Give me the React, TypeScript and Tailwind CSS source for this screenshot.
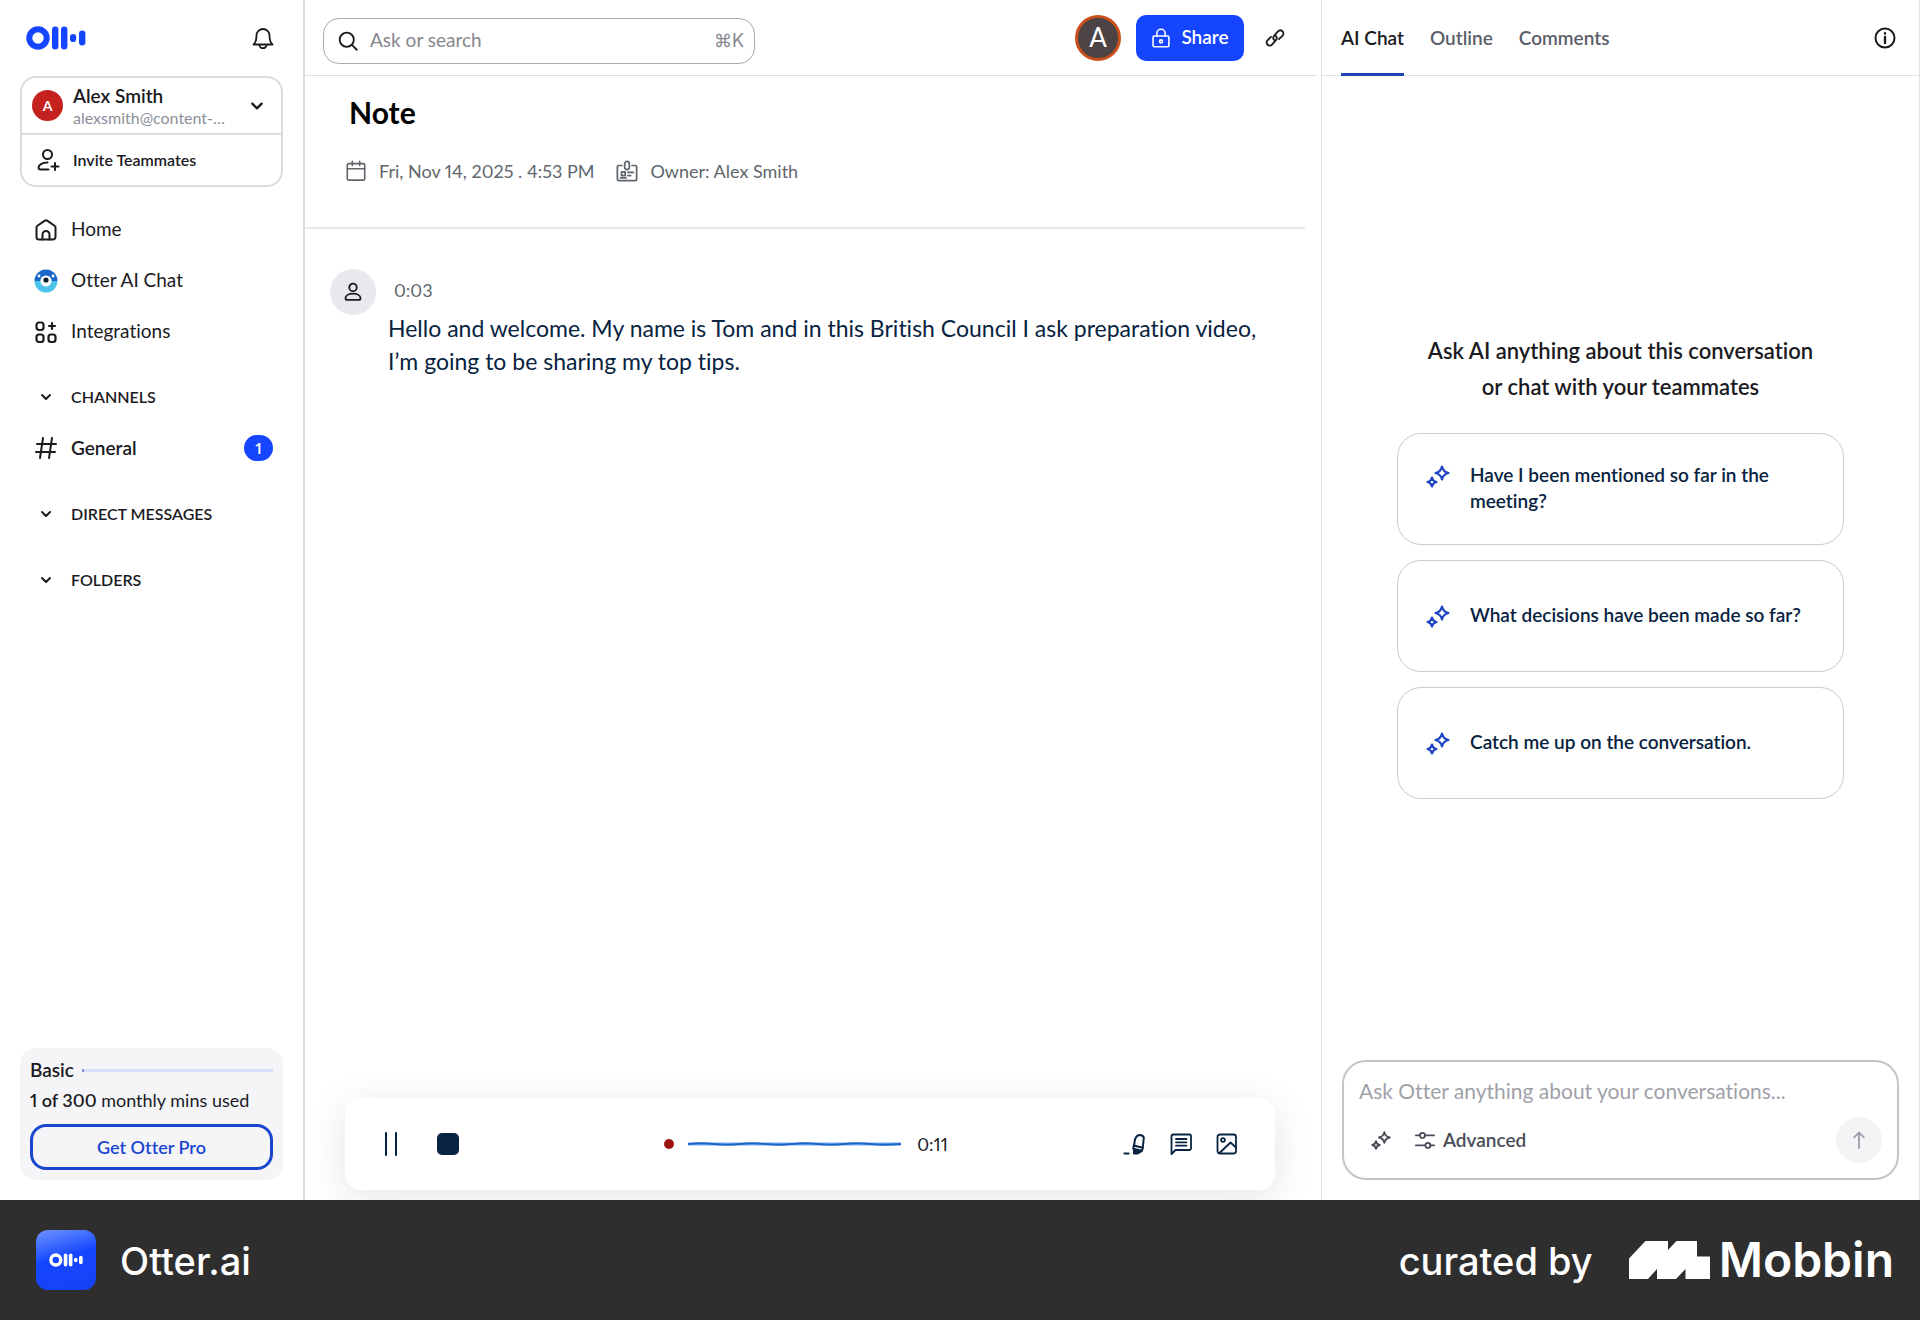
import type { ReactNode } from 'react'

const Sparkles = ({ className, size }: { className?: string; size: number }) => (
  <svg className={className} width={size} height={size} viewBox="0 0 24 24" fill="none" stroke="currentColor" strokeWidth="2.2" strokeLinejoin="round" aria-hidden="true">
    <path d="M16 2.5C16.8 6.4 18.6 8.2 22.5 9C18.6 9.8 16.8 11.6 16 15.5C15.2 11.6 13.4 9.8 9.5 9C13.4 8.2 15.2 6.4 16 2.5Z" />
    <path d="M6 13.5C6.6 16.4 7.6 17.4 10.5 18C7.6 18.6 6.6 19.6 6 22.5C5.4 19.6 4.4 18.6 1.5 18C4.4 17.4 5.4 16.4 6 13.5Z" />
  </svg>
)

const Chevron = ({ size }: { size: number }) => (
  <svg width={size} height={size} viewBox="0 0 12 12" fill="none" stroke="currentColor" strokeWidth="2" strokeLinecap="round" strokeLinejoin="round" aria-hidden="true">
    <path d="M2 4l4 4 4-4" />
  </svg>
)

const OtterMark = ({ width, height }: { width: number; height: number }) => (
  <svg width={width} height={height} viewBox="0 0 60 24" fill="currentColor" aria-hidden="true">
    <circle cx="12" cy="12" r="8.7" fill="none" stroke="currentColor" strokeWidth="6" />
    <rect x="26" y="0.5" width="6.4" height="23" rx="3.2" />
    <rect x="35" y="0.5" width="6.4" height="23" rx="3.2" />
    <rect x="44" y="8" width="6.2" height="8" rx="3.1" />
    <rect x="53" y="4.5" width="6.4" height="15" rx="3.2" />
  </svg>
)

const Icon = ({ size, stroke, children }: { size: number; stroke: number; children: ReactNode }) => (
  <svg width={size} height={size} viewBox="0 0 24 24" fill="none" stroke="currentColor" strokeWidth={stroke} strokeLinecap="round" strokeLinejoin="round" aria-hidden="true" className="shrink-0">
    {children}
  </svg>
)

const navItems = [
  {
    label: 'Home',
    icon: (
      <Icon size={24} stroke={2}>
        <path d="M2.5 9.5a2 2 0 0 1 .9-1.7L10.9 2.6a2 2 0 0 1 2.2 0l7.5 5.2a2 2 0 0 1 .9 1.7V19a2.5 2.5 0 0 1-2.5 2.5h-14A2.5 2.5 0 0 1 2.5 19z" />
        <path d="M8.5 21.5V16.5a3.5 3.5 0 0 1 7 0v5" />
      </Icon>
    ),
  },
  {
    label: 'Otter AI Chat',
    icon: (
      <svg width="24" height="24" viewBox="0 0 24 24" aria-hidden="true">
        <path d="M0.5 12a11.5 11.5 0 0 1 23 0z" fill="#1b66c9" />
        <path d="M0.5 12a11.5 11.5 0 0 0 23 0z" fill="#4cc3ea" />
        <circle cx="5" cy="7" r="1.4" fill="#fff" />
        <circle cx="19" cy="7" r="1.4" fill="#fff" />
        <circle cx="12" cy="12" r="5.6" fill="#fff" />
        <circle cx="12" cy="11" r="2.6" fill="#0b1f33" />
      </svg>
    ),
  },
  {
    label: 'Integrations',
    icon: (
      <Icon size={24} stroke={2.2}>
        <rect x="2.5" y="2.5" width="7" height="7.5" rx="2.5" />
        <rect x="2.5" y="14.5" width="7" height="7.5" rx="2.5" />
        <rect x="14.5" y="14.5" width="7" height="7.5" rx="2.5" />
        <path d="M18 3v6M15 6h6" />
      </Icon>
    ),
  },
]

const prompts = ['Have I been mentioned so far in the meeting?', 'What decisions have been made so far?', 'Catch me up on the conversation.']

const SectionHeader = ({ label }: { label: string }) => (
  <button className="flex h-6 w-full items-center gap-[13px] pl-3.5 text-base font-semibold">
    <span className="flex w-6 justify-center">
      <Chevron size={12} />
    </span>
    {label}
  </button>
)

const Sidebar = () => (
  <aside className="flex w-[305px] shrink-0 flex-col border-r-2 border-[#d9dbde] px-5 pb-5">
    <div className="flex h-19 items-center justify-between pr-2 pl-1.5 text-[#1545ff]">
      <a href="#home" aria-label="Otter">
        <OtterMark width={60} height={24} />
      </a>
      <button aria-label="Notifications" className="text-[#1b1b1f]">
        <Icon size={24} stroke={1.8}>
          <path d="M2.5 18.5c2-1.8 3-3.5 3-9a6.5 6.5 0 0 1 13 0c0 5.5 1 7.2 3 9z" />
          <path d="M8.5 19a3.5 3.2 0 0 0 7 0" />
        </Icon>
      </button>
    </div>

    <div className="rounded-2xl border-2 border-[#d9dbde]">
      <button className="flex h-[57px] w-full items-center gap-2.5 border-b-2 border-[#d9dbde] pr-[17px] pl-2.5 text-left">
        <span className="flex size-[31px] shrink-0 items-center justify-center rounded-full bg-[#c5221f] text-sm font-bold text-white">A</span>
        <span className="min-w-0 flex-1">
          <span className="block text-[19px] leading-6 font-semibold">Alex Smith</span>
          <span className="block text-base leading-5 text-[#8c8f99]">alexsmith@content-…</span>
        </span>
        <Chevron size={14} />
      </button>
      <button className="flex h-[50px] w-full items-center gap-[13px] pl-3.5 text-base font-semibold">
        <Icon size={24} stroke={2}>
          <circle cx="11.5" cy="6.5" r="4.5" />
          <path d="M11.5 14.5C6 14.5 2.5 17 2.5 19.5c0 1.5 1 2 2.5 2h7.5M15.5 18.5h7M19 15v7" />
        </Icon>
        Invite Teammates
      </button>
    </div>

    <nav className="mt-[25px] flex flex-col gap-4">
      {navItems.map(item => (
        <a key={item.label} href={'#' + item.label} className="flex h-[35px] items-center gap-[13px] pl-3.5 text-[19px]">
          {item.icon}
          {item.label}
        </a>
      ))}
    </nav>

    <div className="mt-9">
      <SectionHeader label="CHANNELS" />
      <a href="#general" className="mt-[26px] flex h-[26px] items-center gap-[13px] pr-2.5 pl-3.5 text-[19px] font-semibold">
        <Icon size={24} stroke={2}>
          <path d="M3 8h19M2 16h19M9 2L6 22M18 2l-3 20" />
        </Icon>
        General
        <span className="ml-auto flex h-[26px] w-[29px] items-center justify-center rounded-full bg-[#1545ff] text-base text-white">1</span>
      </a>
    </div>
    <div className="mt-[41px] flex flex-col gap-[42px]">
      <SectionHeader label="DIRECT MESSAGES" />
      <SectionHeader label="FOLDERS" />
    </div>

    <div className="mt-auto rounded-2xl bg-[#f5f5f8] px-2.5 py-2.5">
      <div className="flex h-6 items-center gap-2">
        <span className="text-[19px] font-semibold">Basic</span>
        <span className="h-[3px] flex-1 border-l-2 border-[#7f93e0] bg-[#d3dffb]" />
      </div>
      <p className="mt-0.5 text-lg leading-8">
        <b className="font-semibold">1 of 300</b> monthly mins used
      </p>
      <button className="mt-2 h-[46px] w-full rounded-2xl border-[3px] border-[#1a45cf] text-lg font-semibold text-[#1a45cf]">Get Otter Pro</button>
    </div>
  </aside>
)

const TopBar = () => (
  <header className="mr-1 flex h-19 items-center border-b border-[#dfe0e3] pr-8 pl-[18px]">
    <label className="mt-1.5 flex h-[46px] w-[432px] items-center gap-3 rounded-2xl border border-[#a9acb0] pr-2.5 pl-3.5">
      <Icon size={20} stroke={2.2}>
        <circle cx="10.5" cy="10.5" r="8.5" />
        <path d="M17 17l5.5 5.5" />
      </Icon>
      <input aria-label="Ask or search" placeholder="Ask or search" className="min-w-0 flex-1 text-[19px] outline-none placeholder:text-[#85878d]" />
      <kbd className="font-[Inter] text-lg text-[#85878d]">⌘K</kbd>
    </label>
    <div className="ml-auto flex items-center gap-[15px]">
      <span className="flex size-[46px] items-center justify-center rounded-full border-[3px] border-[#c9501c] bg-[#4b4344] text-[26px] text-white">A</span>
      <button className="flex h-[46px] w-[108px] items-center justify-center gap-2.5 rounded-[10px] bg-[#1545ff] text-[19px] font-semibold text-white">
        <Icon size={20} stroke={1.9}>
          <rect x="2.5" y="9.5" width="19" height="13" rx="1.5" />
          <path d="M7 9.5V6.5a5 5 0 0 1 10 0v3" />
          <circle cx="12" cy="16" r="1.8" />
        </Icon>
        Share
      </button>
      <button aria-label="Copy link" className="ml-1.5">
        <Icon size={20} stroke={2.2}>
          <path d="M11.2 14.6a3.7 3.7 0 0 1-.6-4.8l5-5.7a3.7 3.7 0 0 1 5.5 5l-4.3 4.3" />
          <path d="M12.8 9.4a3.7 3.7 0 0 1 .6 4.8l-5 5.7a3.7 3.7 0 0 1-5.5-5l4.3-4.3" />
        </Icon>
      </button>
    </div>
  </header>
)

const Recorder = () => (
  <div className="mr-[46px] mb-2.5 ml-10 flex h-[92px] items-center rounded-2xl bg-white pr-9 pl-[38px] text-[#08233f] shadow-[0_8px_40px_rgba(20,20,50,0.11)]">
    <div className="flex flex-1 items-center gap-[38px]">
      <button aria-label="Pause" className="flex h-6 w-4 justify-between px-0.5">
        <span className="h-full w-0.5 rounded-full bg-current" />
        <span className="h-full w-0.5 rounded-full bg-current" />
      </button>
      <button aria-label="Stop" className="size-[22px] rounded-[5px] bg-current" />
    </div>
    <div className="flex items-center pr-2.5">
      <span className="mr-3.5 size-2.5 rounded-full bg-[#9b1414]" />
      <svg width="213" height="6" viewBox="0 0 213 6" fill="none" aria-hidden="true">
        <path d="M0 3h213" stroke="#77aef2" strokeWidth="3" />
        <path d="M0 3q13-1.5 26 0t26 0t26 0t26 0t26 0t26 0t26 0t31 0" stroke="#1f65c8" strokeWidth="1.8" />
      </svg>
      <span className="ml-4 text-lg text-[#1b1b1f]">0:11</span>
    </div>
    <div className="flex flex-1 items-center justify-end gap-[22px]">
      <button aria-label="Highlight">
        <Icon size={24} stroke={2}>
          <path d="M11 13.5l1-6Q13.5 3 17 3Q20.8 3.5 20.8 6l-1 9.5" />
          <path d="M10.8 13.5l9 2.3-.8 3-3.5 2.2M10.8 13.5l-.6 3.3 8.5 2" />
          <path d="M11 17.5v4h3.5l2.5-2.5z" fill="currentColor" />
          <path d="M1.5 21.5h4" strokeWidth="2.2" />
        </Icon>
      </button>
      <button aria-label="Comment">
        <Icon size={24} stroke={1.8}>
          <path d="M2.5 22V4a1.5 1.5 0 0 1 1.5-1.5h16.5A1.5 1.5 0 0 1 22 4v12.5a1.5 1.5 0 0 1-1.5 1.5H6.5zM7 7h10.5M7 10.3h10.5M7 13.6h10.5" />
        </Icon>
      </button>
      <button aria-label="Add image">
        <Icon size={24} stroke={1.8}>
          <rect x="2.5" y="2.5" width="18.5" height="19" rx="2.5" />
          <circle cx="8" cy="8" r="1.9" />
          <path d="M4.5 21L15.5 10.5 21 15.5" />
        </Icon>
      </button>
    </div>
  </div>
)

const Note = () => (
  <main className="flex min-w-0 flex-1 flex-col">
    <TopBar />
    <div className="mr-4 flex h-[153px] flex-col border-b-2 border-[#e8e9eb] pt-[18px]">
      <h1 className="pl-11 text-[30px] leading-9 font-bold text-black">Note</h1>
      <div className="mt-[29px] flex h-6 items-center pl-10 text-lg text-[#61666d]">
        <Icon size={22} stroke={1.8}>
          <rect x="2.5" y="4" width="19" height="18" rx="1.5" />
          <path d="M2.5 9.5h19M8 1.5V6M16 1.5V6" />
        </Icon>
        <span className="ml-3">Fri, Nov 14, 2025 . 4:53 PM</span>
        <span className="ml-[22px] flex items-center gap-3">
          <Icon size={22} stroke={1.9}>
            <path d="M6.5 6H3a1.5 1.5 0 0 0-1.5 1.5V21A1.5 1.5 0 0 0 3 22.5h18a1.5 1.5 0 0 0 1.5-1.5V7.5A1.5 1.5 0 0 0 21 6h-3.5" />
            <rect x="9.5" y="1.5" width="5" height="9" rx="2.5" />
            <rect x="6" y="13" width="4" height="4" />
            <path d="M13 13.5h6M13 17h3M5 19.5h6" />
          </Icon>
          Owner: Alex Smith
        </span>
      </div>
    </div>
    <div className="flex gap-3 pt-10 pr-14 pl-[25px]">
      <span className="flex size-[46px] shrink-0 items-center justify-center rounded-full bg-[#e8e8ee] text-[#1b1b1f]">
        <Icon size={20} stroke={2.2}>
          <circle cx="12" cy="6.5" r="4.5" />
          <path d="M12 14c5 0 9 2.2 9 5.5 0 1.3-.7 2-2 2H5c-1.3 0-2-.7-2-2C3 16.2 7 14 12 14z" />
        </Icon>
      </span>
      <div>
        <p className="pt-1.5 pl-1.5 text-lg leading-[30px] text-[#61666d]">0:03</p>
        <p className="mt-[7px] text-[23px] leading-[33px] text-[#08233f]">
          Hello and welcome. My name is Tom and in this British Council I ask preparation video, I’m going to be sharing my top tips.
        </p>
      </div>
    </div>
    <div className="mt-auto">
      <Recorder />
    </div>
  </main>
)

const ChatPanel = () => (
  <section className="flex w-[599px] shrink-0 flex-col border-x border-[#e1e2e5]">
    <div className="flex h-19 items-center border-b border-[#dfe0e3] pr-[22px] pl-[19px] text-[19px] font-semibold">
      <div role="tablist" className="-mb-px flex h-19 gap-[26px] text-[#5b5d68]">
        <button role="tab" aria-selected="true" className="border-b-[3px] border-[#1f45b5] pt-[3px] text-[#1b1b1f]">AI Chat</button>
        <button role="tab" aria-selected="false">Outline</button>
        <button role="tab" aria-selected="false">Comments</button>
      </div>
      <button aria-label="Info" className="ml-auto text-[#1b1b1f]">
        <Icon size={24} stroke={2}>
          <circle cx="12" cy="12" r="9.5" />
          <path d="M12 11v6M12 7.3v.2" strokeWidth="2.4" />
        </Icon>
      </button>
    </div>

    <div className="flex flex-1 flex-col items-center pt-[257px]">
      <h2 className="w-[420px] text-center text-[22px] leading-9 font-semibold">
        Ask AI anything about this conversation
        <br />
        or chat with your teammates
      </h2>
      <div className="mt-7 flex w-[447px] flex-col gap-[15px]">
        {prompts.map(prompt => (
          <button key={prompt} className="flex h-28 items-center rounded-3xl border border-[#c9cbcf] pr-8 pb-0.5 pl-7 text-left text-[19px] leading-[26px] font-semibold text-[#08233f]">
            <span className="flex items-start gap-5">
              <Sparkles size={24} className="mt-0.5 shrink-0 text-[#1f45c4]" />
              {prompt}
            </span>
          </button>
        ))}
      </div>
    </div>

    <div className="mx-5 mb-5 flex h-[120px] flex-col justify-between rounded-3xl border-2 border-[#c3c5c9] px-[15px] pt-3 pb-[15px]">
      <input aria-label="Ask Otter" placeholder="Ask Otter anything about your conversations..." className="h-8 w-full text-[21px] outline-none placeholder:text-[#9fa1a8]" />
      <div className="flex items-center text-[#4a4c57]">
        <button aria-label="Suggestions" className="ml-3">
          <Sparkles size={20} />
        </button>
        <button className="ml-6 flex items-center gap-2 text-[19px] font-semibold">
          <Icon size={20} stroke={2}>
            <path d="M1 6.5h5M12 6.5h11M1 18.5h11M18 18.5h5" />
            <circle cx="9" cy="6.5" r="3" />
            <circle cx="15.5" cy="18.5" r="3" />
          </Icon>
          Advanced
        </button>
        <button aria-label="Send" className="ml-auto flex size-[46px] items-center justify-center rounded-full bg-[#f4f4f7] text-[#9396a0]">
          <Icon size={20} stroke={2}>
            <path d="M12 21.500V3M6 9l6-6 6 6" />
          </Icon>
        </button>
      </div>
    </div>
  </section>
)

const Footer = () => (
  <footer className="flex h-[120px] items-center bg-[#2e2e2e] pr-[26px] pl-9 font-[Inter] text-white">
    <span className="flex size-15 items-center justify-center rounded-xl bg-linear-165 from-[#6f90ff] via-[#1545ff] via-45% to-[#1643f5]">
      <OtterMark width={34} height={14} />
    </span>
    <span className="ml-6 pt-0.5 text-[38px] font-medium">Otter.ai</span>
    <span className="ml-auto pt-0.5 text-[38px] font-medium">curated by</span>
    <svg className="ml-9" width="82" height="38" viewBox="0 0 82 38" fill="currentColor" aria-hidden="true">
      <path d="M0 38V17.5L16.5 0H39V9L47.5 0H68V15.5H81V38H56.5V28L47 38H28V28L19 38Z" />
    </svg>
    <span className="ml-2 text-5xl font-semibold">Mobbin</span>
  </footer>
)

export default function App() {
  return (
    <div className="flex min-h-screen flex-col bg-white font-[Lato,sans-serif] text-[#1b1b1f] proportional-nums [font-variant-ligatures:none]">
      <div className="flex flex-1">
        <Sidebar />
        <Note />
        <ChatPanel />
      </div>
      <Footer />
    </div>
  )
}
